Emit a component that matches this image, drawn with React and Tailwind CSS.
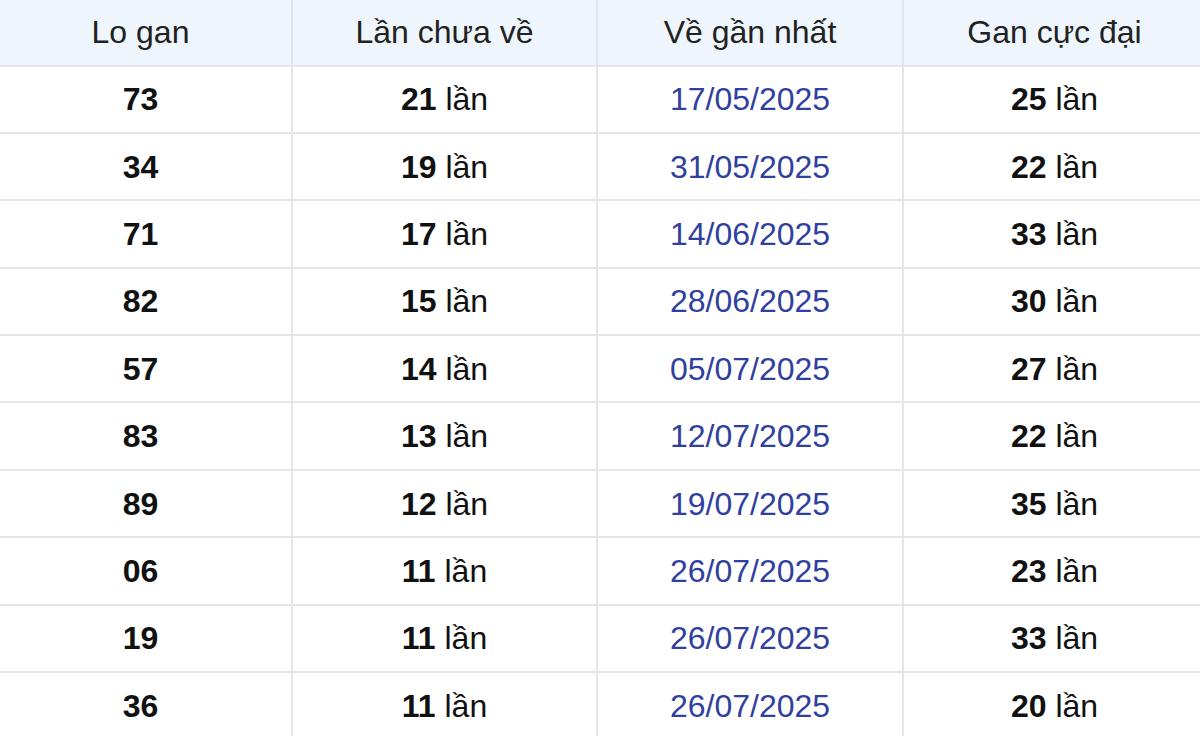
import React from 'react';

const rows = [
    { lo: '73', chua: 21, date: '17/05/2025', max: 25 },
    { lo: '34', chua: 19, date: '31/05/2025', max: 22 },
    { lo: '71', chua: 17, date: '14/06/2025', max: 33 },
    { lo: '82', chua: 15, date: '28/06/2025', max: 30 },
    { lo: '57', chua: 14, date: '05/07/2025', max: 27 },
    { lo: '83', chua: 13, date: '12/07/2025', max: 22 },
    { lo: '89', chua: 12, date: '19/07/2025', max: 35 },
    { lo: '06', chua: 11, date: '26/07/2025', max: 23 },
    { lo: '19', chua: 11, date: '26/07/2025', max: 33 },
    { lo: '36', chua: 11, date: '26/07/2025', max: 20 },
];

const cell = 'border-b-2 border-r-2 border-[#e3e5e9] text-center align-middle p-0';
const lastCell = 'border-b-2 border-[#e3e5e9] text-center align-middle p-0';

const App = () => {
    return (
        <div className="w-[1200px] h-[736px] overflow-hidden bg-white" style={{ fontFamily: '"Liberation Sans", Arial, sans-serif' }}>
            <table className="w-[1215px] -ml-[10px] table-fixed border-separate border-spacing-0 text-[32px] leading-none">
                <colgroup>
                    <col className="w-[303px]" />
                    <col className="w-[305px]" />
                    <col className="w-[306px]" />
                    <col className="w-[301px]" />
                </colgroup>
                <thead>
                    <tr className="h-[66.5px] bg-[#eef5fc] text-[#222]">
                        <th className={`${cell} font-normal`}>Lo gan</th>
                        <th className={`${cell} font-normal`}>Lần chưa về</th>
                        <th className={`${cell} font-normal`}>Về gần nhất</th>
                        <th className={`${lastCell} font-normal`}>Gan cực đại</th>
                    </tr>
                </thead>
                <tbody>
                    {rows.map((r, i) => (
                        <tr key={i} className="h-[67.4px] text-[#111]">
                            <td className={`${cell} font-bold`}>{r.lo}</td>
                            <td className={cell}>
                                <span className="font-bold">{r.chua}</span> lần
                            </td>
                            <td className={`${cell} text-[#30409e]`}>{r.date}</td>
                            <td className={lastCell}>
                                <span className="font-bold">{r.max}</span> lần
                            </td>
                        </tr>
                    ))}
                </tbody>
            </table>
        </div>
    );
};

export default App;
